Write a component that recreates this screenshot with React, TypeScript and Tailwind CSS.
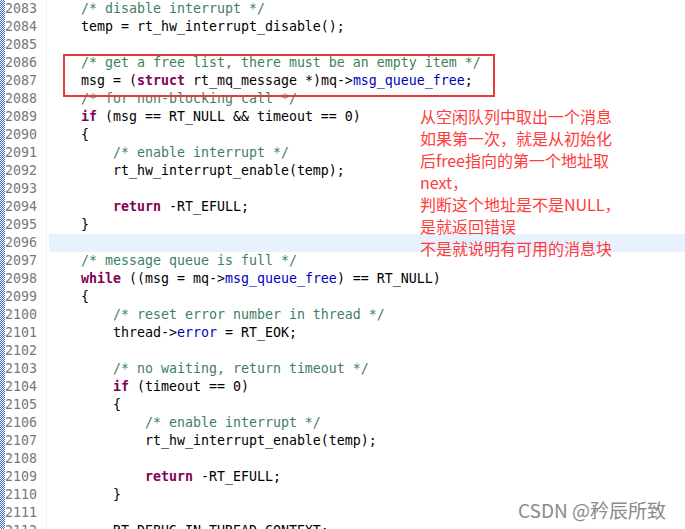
import React from "react";

type Tok = { t: string; c?: "cm" | "kw" | "fd" };
type Line = { n: number; toks: Tok[]; hl?: boolean };

const L = (n: number, ...toks: (Tok | string)[]): Line => ({
  n,
  toks: toks.map((x) => (typeof x === "string" ? { t: x } : x)),
});
const cm = (t: string): Tok => ({ t, c: "cm" });
const kw = (t: string): Tok => ({ t, c: "kw" });
const fd = (t: string): Tok => ({ t, c: "fd" });

const lines: Line[] = [
  L(2083, "    ", cm("/* disable interrupt */")),
  L(2084, "    temp = rt_hw_interrupt_disable();"),
  L(2085),
  L(2086, "    ", cm("/* get a free list, there must be an empty item */")),
  L(2087, "    msg = (", kw("struct"), " rt_mq_message *)mq->", fd("msg_queue_free"), ";"),
  L(2088, "    ", cm("/* for non-blocking call */")),
  L(2089, "    ", kw("if"), " (msg == RT_NULL && timeout == 0)"),
  L(2090, "    {"),
  L(2091, "        ", cm("/* enable interrupt */")),
  L(2092, "        rt_hw_interrupt_enable(temp);"),
  L(2093),
  L(2094, "        ", kw("return"), " -RT_EFULL;"),
  L(2095, "    }"),
  { ...L(2096), hl: true },
  L(2097, "    ", cm("/* message queue is full */")),
  L(2098, "    ", kw("while"), " ((msg = mq->", fd("msg_queue_free"), ") == RT_NULL)"),
  L(2099, "    {"),
  L(2100, "        ", cm("/* reset error number in thread */")),
  L(2101, "        thread->", fd("error"), " = RT_EOK;"),
  L(2102),
  L(2103, "        ", cm("/* no waiting, return timeout */")),
  L(2104, "        ", kw("if"), " (timeout == 0)"),
  L(2105, "        {"),
  L(2106, "            ", cm("/* enable interrupt */")),
  L(2107, "            rt_hw_interrupt_enable(temp);"),
  L(2108),
  L(2109, "            ", kw("return"), " -RT_EFULL;"),
  L(2110, "        }"),
  L(2111),
  L(2112, "        RT_DEBUG_IN_THREAD_CONTEXT;"),
];

const cls = (c?: string) =>
  c === "cm"
    ? "text-[#3f7f5f]"
    : c === "kw"
    ? "text-[#7f0055] font-bold"
    : c === "fd"
    ? "text-[#0000c0]"
    : "text-[#000000]";

const notes = [
  "从空闲队列中取出一个消息",
  "如果第一次，就是从初始化",
  "后free指向的第一个地址取",
  "next，",
  "判断这个地址是不是NULL，",
  "是就返回错误",
  "不是就说明有可用的消息块",
];

export default function App() {
  return (
    <div className="relative w-[685px] h-[529px] overflow-hidden bg-white">
      <div className="flex h-full font-['DejaVu_Sans_Mono',monospace] text-[13.29px] leading-[18px]">
        <div className="w-[5px] h-full shrink-0 bg-[repeating-conic-gradient(#3f70d8_0_25%,#ffffff_0_50%)] bg-[length:2px_2px]" />
        <div className="w-[42px] shrink-0 border-r border-[#f0f0f0] text-[#787878]">
          {lines.map((l) => (
            <div key={l.n} className="h-[18px] whitespace-pre">
              {l.n}
            </div>
          ))}
        </div>
        <div className="flex-1 ml-[2px]">
          {lines.map((l) => (
            <div
              key={l.n}
              className={`h-[18px] whitespace-pre ${l.hl ? "bg-[#e8f2fe]" : ""}`}
            >
              {l.toks.map((t, i) => (
                <span key={i} className={cls(t.c)}>
                  {t.t}
                </span>
              ))}
            </div>
          ))}
        </div>
      </div>

      <div className="absolute left-[63px] top-[54px] w-[432px] h-[43px] border-2 border-[#e83a3a]" />

      <div className="absolute left-[420px] top-[105px] font-['Noto_Sans_CJK_SC',sans-serif] text-[16px] leading-[22px] text-[#ff3b3b]">
        {notes.map((n, i) => (
          <div key={i} className="whitespace-pre">
            {n}
          </div>
        ))}
      </div>

      <div className="absolute left-[518px] top-[498px] font-['Noto_Sans_CJK_SC',sans-serif] text-[19px] leading-[24px] text-[#8a8a8a] [text-shadow:0_0_1px_#ffffff,1px_1px_0_#ffffff]">
        CSDN @矜辰所致
      </div>
    </div>
  );
}
